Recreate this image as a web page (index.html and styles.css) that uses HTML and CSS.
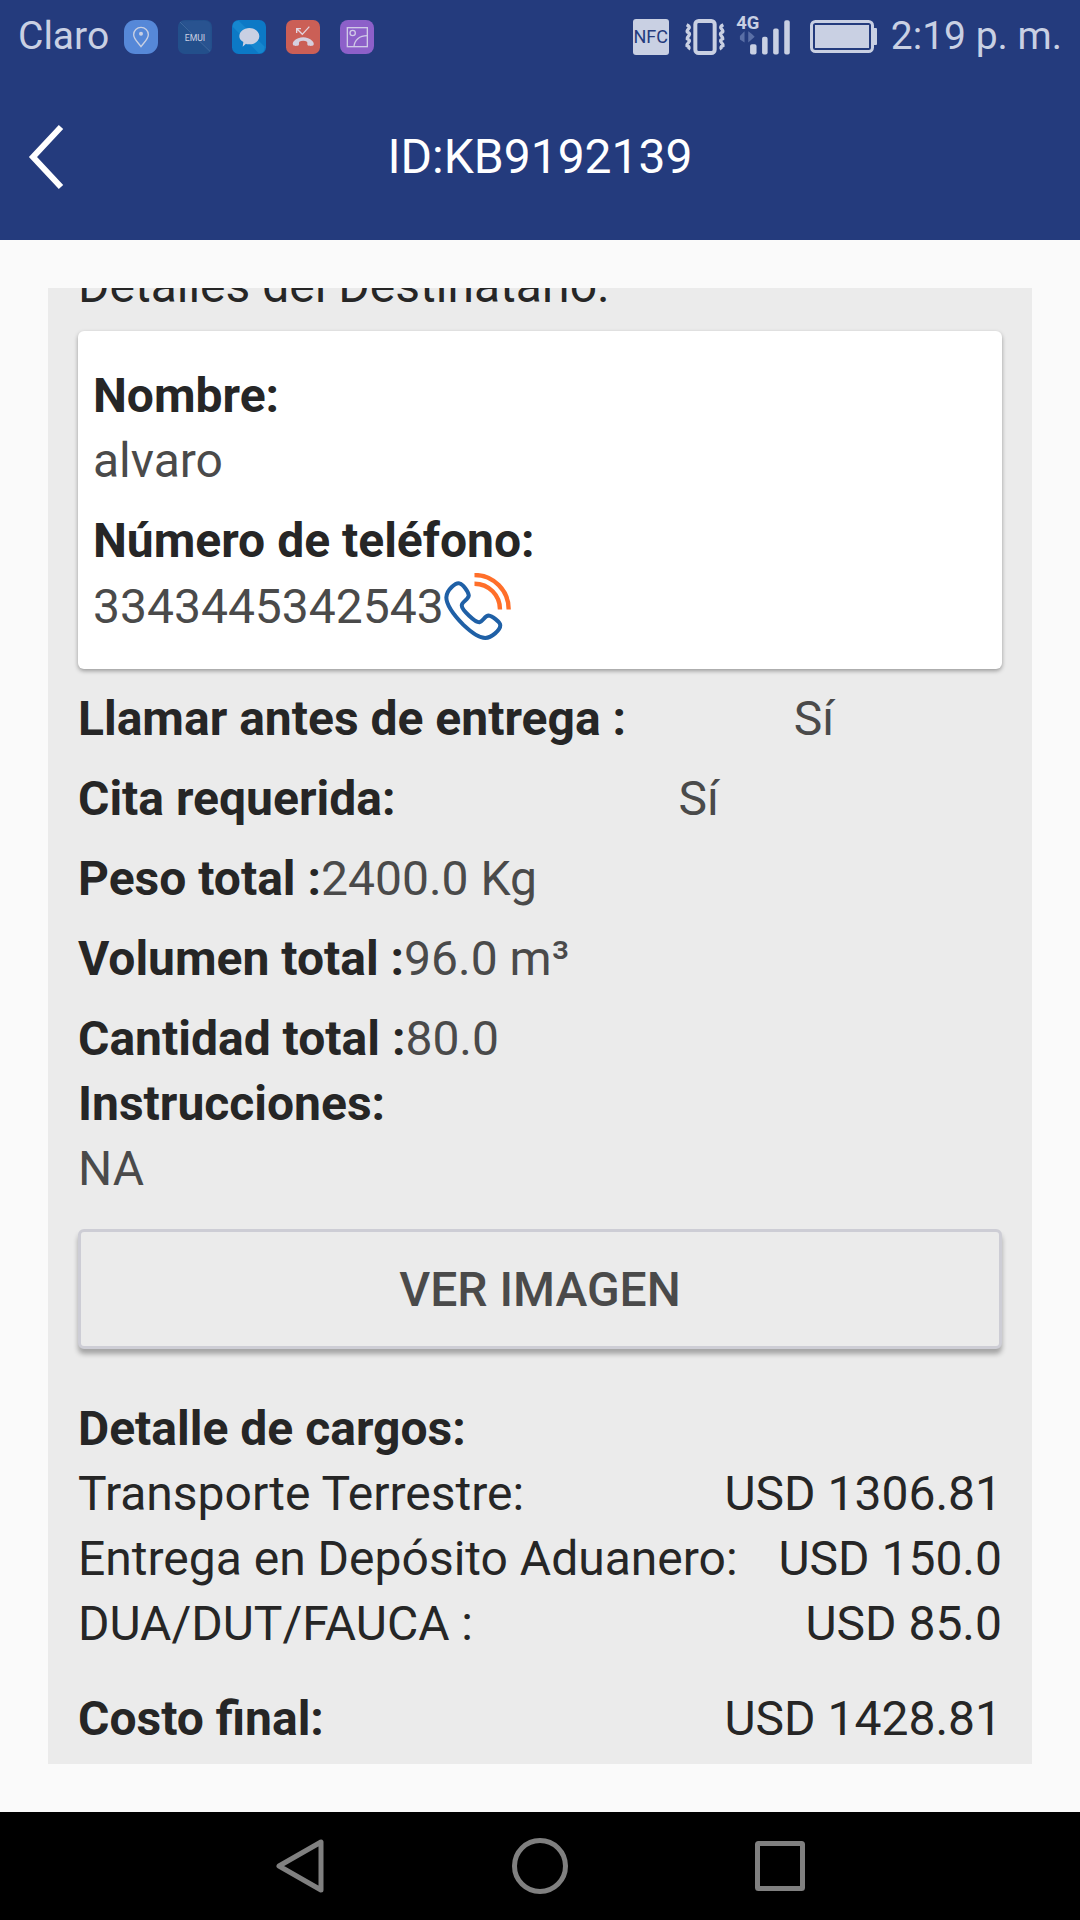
FILE: index.html
```html
<!DOCTYPE html>
<html lang="es">
<head>
    <meta charset="UTF-8">
    <meta name="viewport" content="width=device-width, initial-scale=1.0">
    <title>ID:KB9192139</title>
    <link rel="stylesheet" href="styles.css">
</head>
<body>
    <div class="statusbar">
        <span>Claro</span>
        <div class="apps">
            <svg width="34" height="34" viewBox="0 0 102 102">
                <rect width="102" height="102" rx="34" fill="#5688d8"/>
                <path d="M51 80C40 65 29 56 29 44a22 22 0 0 1 44 0c0 12-11 21-22 36z" fill="none" stroke="#c9d0e3" stroke-width="4"/>
                <circle cx="51" cy="41" r="6" fill="#c9d0e3"/>
            </svg>
            <svg width="34" height="34" viewBox="0 0 102 102">
                <rect width="102" height="102" rx="20" fill="#234f8b"/>
                <path d="M8 4L98 94V20Q98 2 80 2z" fill="#295390"/>
                <path d="M6 6L96 94" stroke="#41699f" stroke-width="3"/>
                <text x="51" y="62" class="emui">EMUI</text>
            </svg>
            <svg width="34" height="34" viewBox="0 0 102 102">
                <rect width="102" height="102" rx="20" fill="#0c79c6"/>
                <path d="M2 20Q2 2 20 2L98 80Q98 100 80 100z" fill="#1687cf"/>
                <path d="M52 24c17 0 30 11 30 25S69 73 52 73c-3 0-7 0-10-2l-10 9 2-14c-8-4-12-10-12-17 0-14 13-25 30-25z" fill="#c9d0e3"/>
            </svg>
            <svg width="34" height="34" viewBox="0 0 102 102">
                <rect width="102" height="102" rx="20" fill="#cb5f56"/>
                <path d="M32 39V26H45M33 27L49 43L70 20" fill="none" stroke="#e3d5df" stroke-width="4"/>
                <path d="M22 76c-3-4-2-9 2-13 15-15 40-15 55 0 4 4 6 9 3 13-2 3-15 2-17 0-2-3 0-9-2-11-6-4-17-4-23 0-2 2 0 8-2 11-2 2-14 3-16 0z" fill="#d6d0df"/>
            </svg>
            <svg width="34" height="34" viewBox="0 0 102 102">
                <rect width="102" height="102" rx="24" fill="#8d60c9"/>
                <g fill="none" stroke="#d0cae7" stroke-width="4">
                    <rect x="22" y="23" width="60" height="57"/>
                    <circle cx="38" cy="39" r="8"/>
                    <path d="M42 80C43 60 58 47 82 47"/>
                </g>
            </svg>
        </div>
        <div class="system">
            <span class="nfc">NFC</span>
            <svg class="vibrate" width="42" height="36" viewBox="0 0 126 108">
                <rect x="34" y="6" width="58" height="96" rx="10" fill="none" stroke="#c9d0e3" stroke-width="12"/>
                <path d="M8 17q12 6 6 12t-4 10q10 4 5 10t-5 10q10 5 4 11t-5 10q10 4 4 11M118 17q-12 6-6 12t4 10q-10 4-5 10t5 10q-10 5-4 11t5 10q-10 4-4 11" fill="none" stroke="#c9d0e3" stroke-width="10"/>
            </svg>
            <svg class="signal" width="58" height="52" viewBox="0 0 58 52">
                <text x="0" y="19" class="network">4G</text>
                <g fill="#c9d0e3">
                    <rect x="15" y="36" width="7" height="11" rx="2"/>
                    <rect x="28" y="28" width="6" height="19" rx="2"/>
                    <rect x="40" y="19" width="6" height="28" rx="2"/>
                    <rect x="52" y="10" width="6" height="37" rx="2"/>
                </g>
                <path d="M4 27l5-5v12l-5-3zM13 22v12l7-6-3-3z" fill="#5a6fa6"/>
            </svg>
            <svg class="battery" width="67" height="33" viewBox="0 0 67 33">
                <rect x="1.5" y="1.5" width="61" height="30" rx="4" fill="none" stroke="#c9d0e3" stroke-width="3"/>
                <rect x="5" y="5" width="54" height="23" fill="#c9d0e3"/>
                <rect x="63" y="8" width="4" height="17" rx="1" fill="#c9d0e3"/>
            </svg>
            <span>2:19 p. m.</span>
        </div>
    </div>

    <header class="header">
        <button class="back" aria-label="Atrás">
            <svg width="40" height="68" viewBox="0 0 40 68"><path d="M35 4L7 34L35 64" fill="none" stroke="#fff" stroke-width="6"/></svg>
        </button>
        <h1>ID:KB9192139</h1>
    </header>

    <main class="content">
        <!-- the panel stays scrolled to its end -->
        <div class="panel">
            <h2 class="section">Detalles del Destinatario:</h2>
            <div class="card">
                <div>
                    <h3>Nombre:</h3>
                    <p>alvaro</p>
                </div>
                <div>
                    <h3>Número de teléfono:</h3>
                    <div class="phone">
                        <p>3343445342543</p>
                        <a href="tel:3343445342543" aria-label="Llamar">
                            <svg width="67" height="67" viewBox="72 37 200 200" fill="none">
                                <path d="M118 68C108 65 80 86 79 110C79 132 101 162 130 192C155 216 178 231 195 231C214 230 240 208 240 193C240 184 216 165 205 164C194 164 188 182 178 184C166 186 125 147 125 134C125 122 145 118 146 104C145 92 128 70 118 68Z" stroke="#1f60a6" stroke-width="12"/>
                                <path d="M163 43A102 102 0 0 1 265 146M163 69A76 76 0 0 1 239 146" stroke="#ff6f2a" stroke-width="13"/>
                            </svg>
                        </a>
                    </div>
                </div>
            </div>

            <div class="rows">
                <div class="row"><h3>Llamar antes de entrega :</h3><p class="answer">Sí</p></div>
                <div class="row"><h3>Cita requerida:</h3><p class="answer">Sí</p></div>
                <div class="row"><h3>Peso total :</h3><p>2400.0 Kg</p></div>
                <div class="row"><h3>Volumen total :</h3><p>96.0 m³</p></div>
                <div class="row"><h3>Cantidad total :</h3><p>80.0</p></div>
            </div>
            <h3>Instrucciones:</h3>
            <p>NA</p>

            <button class="image-button">VER IMAGEN</button>

            <h3>Detalle de cargos:</h3>
            <table class="charges">
                <tbody>
                    <tr><th scope="row">Transporte Terrestre:</th><td>USD 1306.81</td></tr>
                    <tr><th scope="row">Entrega en Depósito Aduanero:</th><td>USD 150.0</td></tr>
                    <tr><th scope="row">DUA/DUT/FAUCA :</th><td>USD 85.0</td></tr>
                </tbody>
                <tfoot>
                    <tr><th scope="row">Costo final:</th><td>USD 1428.81</td></tr>
                </tfoot>
            </table>
        </div>
    </main>

    <nav class="navbar">
        <button aria-label="Volver">
            <svg width="56" height="56" viewBox="0 0 56 56"><path d="M49 4V52L7 28Z"/></svg>
        </button>
        <button aria-label="Inicio">
            <svg width="56" height="56" viewBox="0 0 56 56"><circle cx="28" cy="28" r="25.5"/></svg>
        </button>
        <button aria-label="Recientes">
            <svg width="56" height="56" viewBox="0 0 56 56"><rect x="5.5" y="5.5" width="45" height="45" rx="1"/></svg>
        </button>
    </nav>
</body>
</html>
```
FILE: styles.css
```css
*
{
    box-sizing: border-box;
}
body
{
    margin: 0;
    height: 100vh;
    display: flex;
    flex-direction: column;
    background-color: #fafafa;
    color: #262626;
    font-family: Roboto, "Noto Sans", sans-serif;
    font-size: 48px;
    line-height: 65px;
}
h1, h2, h3, p
{
    margin: 0;
    font-size: 48px;
}
h1, h2
{
    font-weight: 400;
}
h3
{
    font-weight: 700;
}
p
{
    color: #4a4a4a;
}
button
{
    padding: 0;
    border: none;
    background: none;
    font-family: inherit;
}
svg
{
    display: block;
}
.statusbar
{
    display: flex;
    align-items: center;
    height: 73px;
    padding: 0 18px;
    background-color: #243b7d;
    color: #c9d0e3;
    font-size: 39px;
}
.apps
{
    display: flex;
    gap: 20px;
    margin-left: 15px;
}
.emui
{
    fill: #c9d0e3;
    font-size: 26px;
    text-anchor: middle;
}
.system
{
    display: flex;
    align-items: center;
    margin-left: auto;
}
.nfc
{
    width: 36px;
    border-radius: 3px;
    background-color: #c9d0e3;
    color: #243b7d;
    font-size: 18px;
    line-height: 36px;
    text-align: center;
}
.vibrate
{
    margin-left: 15px;
}
.signal
{
    margin: 0 18px 0 8px;
    padding-bottom: 4px;
    overflow: visible;
}
.network
{
    fill: #c9d0e3;
    font-size: 20px;
    font-weight: 700;
}
.battery
{
    margin-right: 14px;
}
.header
{
    display: grid;
    grid-template-columns: 88px 1fr 88px;
    align-items: center;
    height: 167px;
    background-color: #243b7d;
    color: #fff;
    text-align: center;
}
.back
{
    padding-left: 26px;
}
.content
{
    flex: 1;
    min-height: 0;
    display: flex;
    padding: 48px;
}
.panel
{
    flex: 1;
    display: flex;
    flex-direction: column;
    justify-content: flex-end;
    overflow: hidden;
    padding: 0 30px 13px;
    background-color: #ebebeb;
}
.panel > *
{
    flex-shrink: 0;
}
.card
{
    display: flex;
    flex-direction: column;
    gap: 15px;
    margin: 13px 0 17px;
    padding: 32px 15px 29px;
    border-radius: 6px;
    background-color: #fff;
    box-shadow: 0 2px 4px rgba(0,0,0,0.35);
}
.phone
{
    display: flex;
    align-items: center;
}
.rows
{
    display: flex;
    flex-direction: column;
    gap: 15px;
}
.row
{
    display: flex;
}
.answer
{
    flex: 1;
    text-align: center;
}
.image-button
{
    height: 120px;
    margin: 28px 0 47px;
    border: 3px solid #cdcdd5;
    border-radius: 6px;
    background-color: #ebebeb;
    box-shadow: 0 5px 5px rgba(0,0,0,0.3);
    color: #4a4a4a;
    font-size: 48px;
    font-weight: 500;
}
.charges, .charges tbody, .charges tfoot
{
    display: block;
}
.charges tr
{
    display: flex;
    justify-content: space-between;
}
.charges th
{
    padding: 0;
    font-weight: 400;
    text-align: left;
}
.charges td
{
    padding: 0;
    text-align: right;
}
.charges tfoot
{
    padding-top: 30px;
}
.charges tfoot th
{
    font-weight: 700;
}
.navbar
{
    display: grid;
    grid-template-columns: repeat(3, 240px);
    justify-content: center;
    height: 108px;
    background-color: #000;
}
.navbar button
{
    display: flex;
    align-items: center;
    justify-content: center;
}
.navbar svg
{
    fill: none;
    stroke: #808080;
    stroke-width: 5;
    stroke-linejoin: round;
}
```
